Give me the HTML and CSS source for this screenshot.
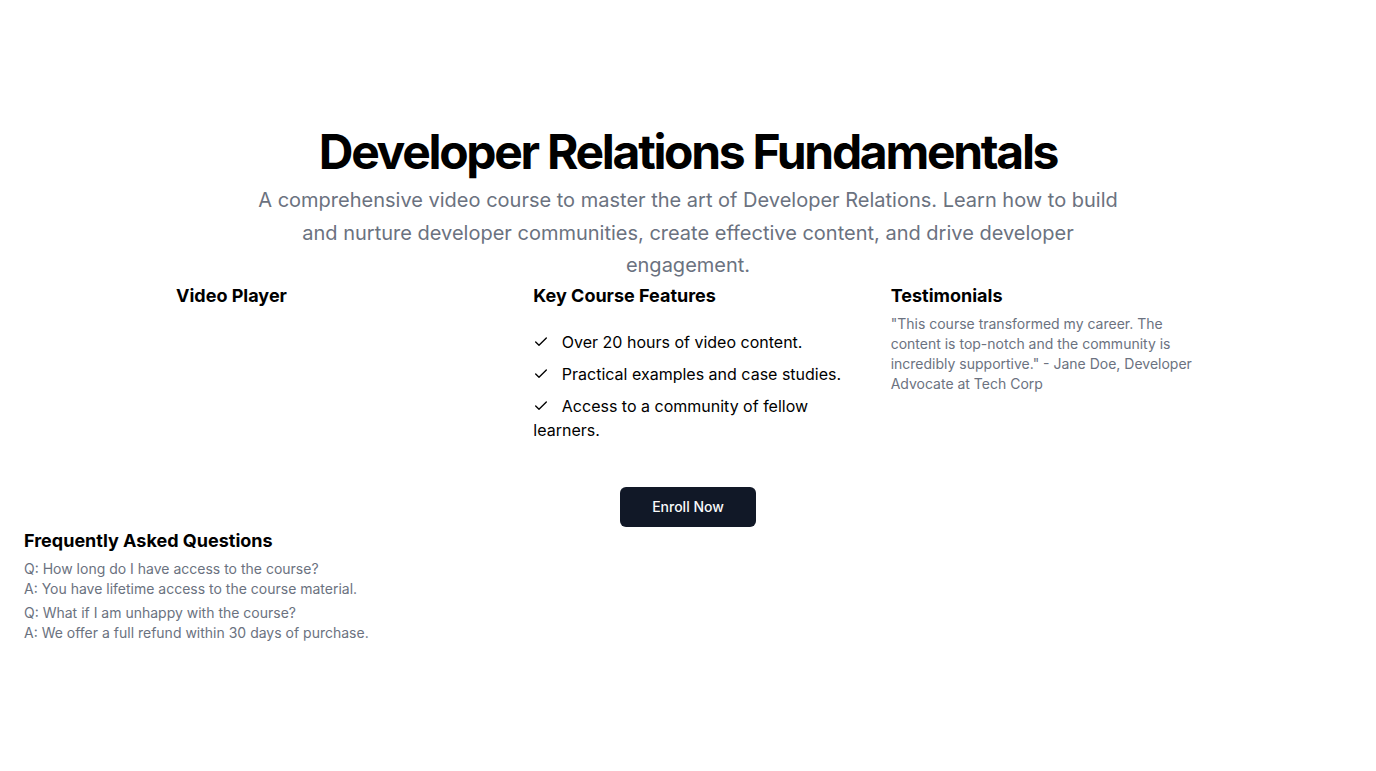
FILE: index.html
```html
<!DOCTYPE html>
<html lang="en">
<head>
<meta charset="utf-8">
<title>Developer Relations Fundamentals</title>
<link rel="stylesheet" href="styles.css">
</head>
<body>
<main class="page">
  <section class="hero">
    <h1 class="title">Developer Relations Fundamentals</h1>
    <p class="subtitle">A comprehensive video course to master the art of Developer Relations. Learn how to build and nurture developer communities, create effective content, and drive developer engagement.</p>
  </section>
  <section class="grid">
    <div class="col">
      <h2 class="col-title">Video Player</h2>
    </div>
    <div class="col">
      <h2 class="col-title">Key Course Features</h2>
      <ul class="features">
        <li><svg class="check" viewBox="0 0 24 24" fill="none" stroke="currentColor" stroke-width="2" stroke-linecap="round" stroke-linejoin="round"><polyline points="20 6 9 17 4 12"></polyline></svg> Over 20 hours of video content.</li>
        <li><svg class="check" viewBox="0 0 24 24" fill="none" stroke="currentColor" stroke-width="2" stroke-linecap="round" stroke-linejoin="round"><polyline points="20 6 9 17 4 12"></polyline></svg> Practical examples and case studies.</li>
        <li><svg class="check" viewBox="0 0 24 24" fill="none" stroke="currentColor" stroke-width="2" stroke-linecap="round" stroke-linejoin="round"><polyline points="20 6 9 17 4 12"></polyline></svg> Access to a community of fellow learners.</li>
      </ul>
    </div>
    <div class="col">
      <h2 class="col-title">Testimonials</h2>
      <p class="quote">"This course transformed my career. The content is top-notch and the community is incredibly supportive." - Jane Doe, Developer Advocate at Tech Corp</p>
    </div>
  </section>
  <div class="cta">
    <a class="btn" href="#">Enroll Now</a>
  </div>
  <section class="faq">
    <h2 class="faq-title">Frequently Asked Questions</h2>
    <div class="qa">
      <p>Q: How long do I have access to the course?</p>
      <p>A: You have lifetime access to the course material.</p>
    </div>
    <div class="qa">
      <p>Q: What if I am unhappy with the course?</p>
      <p>A: We offer a full refund within 30 days of purchase.</p>
    </div>
  </section>
</main>
</body>
</html>
```

FILE: styles.css
```css
* { box-sizing: border-box; }
html, body { margin: 0; padding: 0; }
body {
  font-family: Inter, "Noto Sans", sans-serif;
  color: #000;
  background: #fff;
}
p, h1, h2, ul { margin: 0; padding: 0; }

.page {
  display: flex;
  flex-direction: column;
  padding-top: 128px;
}

.hero {
  display: flex;
  flex-direction: column;
  align-items: center;
  gap: 8px;
  text-align: center;
}
.title {
  font-size: 48px;
  line-height: 1;
  font-weight: 700;
  letter-spacing: -2.3px;
}
.subtitle {
  max-width: 900px;
  font-size: 20px;
  line-height: 32.5px;
  color: #6b7280;
}

.grid {
  width: 1024px;
  margin: 0 auto;
  display: grid;
  grid-template-columns: repeat(3, 1fr);
  gap: 48px;
}
.col-title {
  font-size: 18px;
  line-height: 28px;
  font-weight: 700;
}
.features {
  list-style: none;
  margin-top: 20px;
  display: flex;
  flex-direction: column;
  gap: 8px;
  font-size: 16px;
  line-height: 24px;
}
.check {
  width: 16px;
  height: 16px;
  margin-right: 8px;
  vertical-align: -2px;
}
.quote {
  margin-top: 4px;
  font-size: 14px;
  line-height: 20px;
  color: #6b7280;
}

.cta {
  display: flex;
  justify-content: center;
  margin-top: 45px;
}
.btn {
  display: inline-flex;
  align-items: center;
  justify-content: center;
  height: 40px;
  padding: 0 32px;
  border-radius: 6px;
  background: #111827;
  color: #f9fafb;
  font-size: 14px;
  font-weight: 500;
  text-decoration: none;
}

.faq {
  padding: 0 24px;
  display: flex;
  flex-direction: column;
  gap: 4px;
}
.faq-title {
  font-size: 18px;
  line-height: 28px;
  font-weight: 700;
}
.qa p {
  font-size: 14px;
  line-height: 20px;
  color: #6b7280;
}
```
